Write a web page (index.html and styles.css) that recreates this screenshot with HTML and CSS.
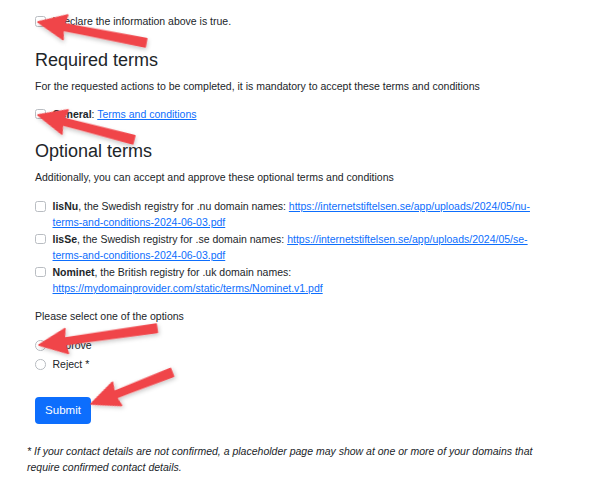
FILE: index.html
```html
<!DOCTYPE html>
<html lang="en">
<head>
<meta charset="utf-8">
<link rel="stylesheet" href="styles.css">
</head>
<body>
<div class="page">
  <div class="check first">
    <input type="checkbox" class="box">
    <label>I declare the information above is true.</label>
  </div>

  <h3 class="title t1">Required terms</h3>
  <p class="lead">For the requested actions to be completed, it is mandatory to accept these terms and conditions</p>
  <div class="check general">
    <input type="checkbox" class="box">
    <label><b>General</b>: <a href="#">Terms and conditions</a></label>
  </div>

  <h3 class="title t2">Optional terms</h3>
  <p class="lead">Additionally, you can accept and approve these optional terms and conditions</p>
  <div class="list">
    <div class="check">
      <input type="checkbox" class="box">
      <label><b>lisNu</b>, the Swedish registry for .nu domain names: <a href="#">https://internetstiftelsen.se/app/uploads/2024/05/nu-terms-and-conditions-2024-06-03.pdf</a></label>
    </div>
    <div class="check">
      <input type="checkbox" class="box">
      <label><b>lisSe</b>, the Swedish registry for .se domain names: <a href="#">https://internetstiftelsen.se/app/uploads/2024/05/se-terms-and-conditions-2024-06-03.pdf</a></label>
    </div>
    <div class="check">
      <input type="checkbox" class="box">
      <label><b>Nominet</b>, the British registry for .uk domain names: <a href="#">https://mydomainprovider.com/static/terms/Nominet.v1.pdf</a></label>
    </div>
  </div>

  <p class="select">Please select one of the options</p>
  <div class="radios">
    <div class="check">
      <input type="radio" name="opt" class="box radio">
      <label>Approve</label>
    </div>
    <div class="check">
      <input type="radio" name="opt" class="box radio">
      <label>Reject *</label>
    </div>
  </div>

  <button class="submit" type="button">Submit</button>
</div>

<p class="note">* If your contact details are not confirmed, a placeholder page may show at one or more of your domains that require confirmed contact details.</p>

<svg class="arrows" width="600" height="494" viewBox="0 0 600 494" aria-hidden="true">
  <defs>
    <filter id="sh" x="-20%" y="-40%" width="140%" height="180%">
      <feDropShadow dx="1" dy="2" stdDeviation="2" flood-color="#000" flood-opacity="0.22"/>
    </filter>
  </defs>
  <g class="arrow" transform="translate(38 22) rotate(10.9)">
    <polygon points="0,0 28,-12.5 26,-3.2 110,-4.3 110,4.3 26,3.2 28,12.5"/>
  </g>
  <g class="arrow" transform="translate(38 115) rotate(14.5)">
    <polygon points="0,0 28,-12.5 26,-3.2 99,-4.3 99,4.3 26,3.2 28,12.5"/>
  </g>
  <g class="arrow" transform="translate(39 345) rotate(-8.1)">
    <polygon points="0,0 28,-12.5 26,-3.2 119,-4.3 119,4.3 26,3.2 28,12.5"/>
  </g>
  <g class="arrow" transform="translate(91 404) rotate(-21.3)">
    <polygon points="0,0 28,-12.5 26,-3.2 87,-4.3 87,4.3 26,3.2 28,12.5"/>
  </g>
</svg>
</body>
</html>
```
FILE: styles.css
```css
* { box-sizing: border-box; }

body {
  margin: 0;
  background: #fff;
  color: #212529;
  font-family: "Liberation Sans", Arial, sans-serif;
  font-size: 10.5px;
  line-height: 15.75px;
}

.page {
  width: 545px;
  padding: 14px 0 0 35px;
}

.check {
  display: flex;
  align-items: flex-start;
  gap: 7px;
}

.check label { flex: 1; }

.box {
  appearance: none;
  -webkit-appearance: none;
  flex: none;
  width: 10.5px;
  height: 10.5px;
  margin: 2px 0 0 0;
  border: 1px solid #b9bdc2;
  border-radius: 2.5px;
  background: #fff;
}

.radio { border-radius: 50%; }

a { color: #0d6efd; text-decoration: underline; }

b { font-weight: 700; }

.title {
  margin: 0;
  font-size: 18px;
  line-height: 21.6px;
  font-weight: 400;
}

.t1 { margin-top: 20.5px; }
.t2 { margin-top: 19px; }

.lead { margin: 7.5px 0 0; }

.general { margin-top: 11.5px; }

.list {
  margin-top: 13px;
  display: flex;
  flex-direction: column;
  gap: 1.3px;
}

.select { margin: 13px 0 0; }

.radios {
  margin-top: 13px;
  display: flex;
  flex-direction: column;
  gap: 3.3px;
}

.submit {
  margin-top: 24px;
  display: block;
  width: 56px;
  height: 27px;
  border: 0;
  border-radius: 4px;
  background: #0d6efd;
  color: #fff;
  font-family: inherit;
  font-size: 11.5px;
  line-height: 16px;
  padding: 0;
}

.note {
  width: 525px;
  margin: 19px 0 0 27px;
  font-style: italic;
  font-size: 10.5px;
  line-height: 16px;
}

.arrows {
  position: absolute;
  left: 0;
  top: 0;
  pointer-events: none;
}

.arrow polygon {
  fill: #f0454a;
  stroke: #f0454a;
  stroke-width: 1.5;
  stroke-linejoin: round;
  filter: url(#sh);
}
```
